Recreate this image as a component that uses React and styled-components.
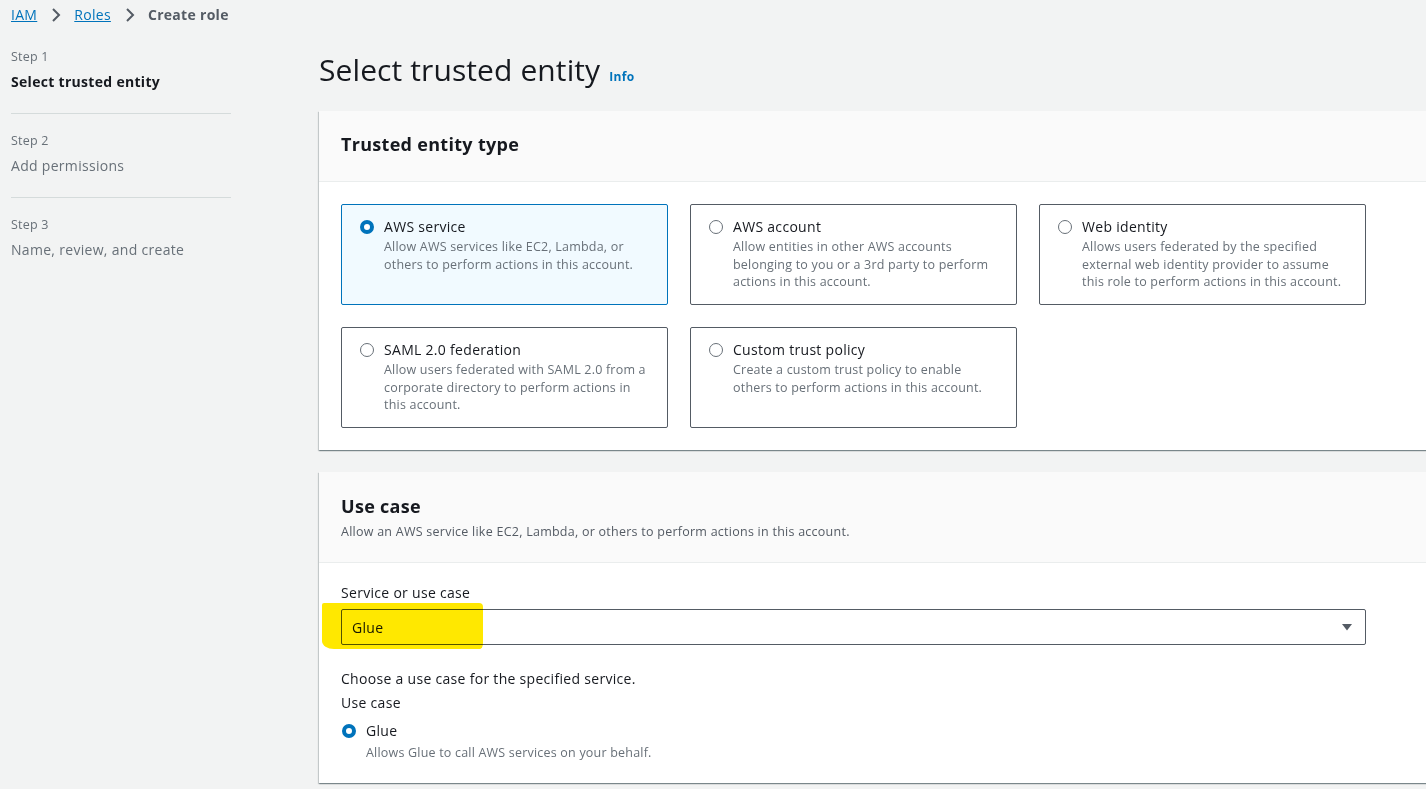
import React from 'react';
import styled, { createGlobalStyle, css } from 'styled-components';

const colors = {
  page: '#f2f3f3',
  text: '#16191f',
  muted: '#545b64',
  soft: '#687078',
  link: '#0073bb',
  tileBorder: '#545b64',
  divider: '#eaeded',
};

const GlobalStyle = createGlobalStyle`
  html, body {
    margin: 0;
    padding: 0;
    background: ${colors.page};
    overflow: hidden;
  }
  body {
    font-family: "Open Sans", "Liberation Sans", Arial, sans-serif;
    color: ${colors.text};
    letter-spacing: 0.3px;
    -webkit-font-smoothing: antialiased;
  }
  * { box-sizing: border-box; }
`;

const Page = styled.div`
  width: 1426px;
  height: 789px;
  overflow: hidden;
  padding: 5px 0 0 11px;
`;

// Breadcrumbs
const Crumbs = styled.nav`
  display: flex;
  align-items: center;
  height: 20px;
  font-size: 14px;
  line-height: 20px;
`;

const CrumbLink = styled.a`
  color: ${colors.link};
  text-decoration: underline;
`;

const CrumbCurrent = styled.span`
  color: ${colors.muted};
  font-weight: 700;
`;

const Chevron = styled.span`
  display: inline-flex;
  margin: 0 11px 0 12px;
  color: ${colors.muted};
`;

const Layout = styled.div`
  display: flex;
  align-items: flex-start;
`;

// Wizard side navigation
const Steps = styled.ol`
  list-style: none;
  margin: 24px 0 0;
  padding: 0;
  width: 220px;
  flex-shrink: 0;
`;

const Step = styled.li`
  padding: ${p => (p.first ? '0 0 21px' : '19px 0 21px')};
  border-bottom: ${p => (p.last ? 'none' : '1px solid #d5dbdb')};
`;

const StepNum = styled.div`
  font-size: 12.5px;
  line-height: 16px;
  letter-spacing: 0.2px;
  color: ${colors.soft};
`;

const StepTitle = styled.div`
  margin-top: 7px;
  font-size: 14px;
  line-height: 20px;
  color: ${p => (p.active ? colors.text : colors.soft)};
  font-weight: ${p => (p.active ? 700 : 400)};
`;

const Main = styled.main`
  margin-left: 88px;
  width: 1130px;
  flex-shrink: 0;
`;

const TitleRow = styled.div`
  display: flex;
  align-items: baseline;
  margin-top: 25px;
  height: 40px;
`;

const Title = styled.h1`
  margin: 0;
  font-size: 30px;
  line-height: 40px;
  font-weight: 400;
  letter-spacing: 0.1px;
  color: ${colors.text};
`;

const InfoLink = styled.a`
  margin-left: 9px;
  font-size: 12px;
  font-weight: 700;
  color: ${colors.link};
`;

const Panel = styled.section`
  background: #fff;
  margin-top: ${p => p.gap || '21px'};
  box-shadow: 0 1px 1px 0 rgba(0, 28, 36, 0.3), 1px 1px 1px 0 rgba(0, 28, 36, 0.15),
    -1px 1px 1px 0 rgba(0, 28, 36, 0.15);
`;

const PanelHeader = styled.header`
  background: #fafafa;
  border-bottom: 1px solid ${colors.divider};
  padding: ${p => p.pad || '21px 22px 25px'};
`;

const PanelTitle = styled.h2`
  margin: 0;
  font-size: 18px;
  line-height: 24px;
  font-weight: 700;
  color: ${colors.text};
`;

const PanelSub = styled.p`
  margin: 6px 0 0;
  font-size: 12.5px;
  line-height: 16px;
  letter-spacing: 0.25px;
  color: ${colors.muted};
`;

const PanelBody = styled.div`
  padding: ${p => p.pad || '22px 22px 22px'};
  width: 1069px;
`;

const TileGrid = styled.div`
  display: grid;
  grid-template-columns: repeat(3, 327px);
  column-gap: 22px;
  row-gap: 22px;
`;

const Tile = styled.label`
  display: flex;
  align-items: flex-start;
  height: 101px;
  padding: 12px 18px 0 18px;
  border: 1px solid ${colors.tileBorder};
  border-radius: 2px;
  background: #fff;
  ${p =>
    p.selected &&
    css`
      border-color: ${colors.link};
      background: #f1faff;
    `}
`;

const Radio = styled.span`
  width: 14px;
  height: 14px;
  margin-top: 3px;
  border-radius: 50%;
  flex-shrink: 0;
  border: 1px solid #687078;
  background: #fff;
  ${p =>
    p.checked &&
    css`
      border: 4px solid ${colors.link};
    `}
`;

const TileText = styled.div`
  margin-left: 10px;
`;

const OptionLabel = styled.div`
  font-size: 14px;
  line-height: 20px;
  color: ${colors.text};
`;

const OptionDesc = styled.div`
  margin-top: ${p => p.gap || '1px'};
  font-size: 12.5px;
  line-height: 17.5px;
  letter-spacing: 0.2px;
  color: ${colors.soft};
`;

const FieldLabel = styled.div`
  font-size: 14px;
  line-height: 20px;
  color: ${colors.text};
  margin-top: ${p => p.gap || '0'};
`;

const SelectWrap = styled.div`
  position: relative;
  margin-top: 6px;
`;

const Select = styled.div`
  display: flex;
  align-items: center;
  justify-content: space-between;
  width: 1025px;
  height: 36px;
  padding: 0 12px 0 10px;
  border: 1px solid ${colors.tileBorder};
  border-radius: 2px;
  font-size: 14px;
  color: ${colors.text};
`;

// hand-drawn yellow marker over the select value
const Highlight = styled.span`
  position: absolute;
  left: -19px;
  top: -6px;
  width: 161px;
  height: 46px;
  background: #ffe800;
  border-radius: 2px 4px 3px 12px / 2px 4px 6px 8px;
  mix-blend-mode: multiply;
  pointer-events: none;
`;

const RadioRow = styled.div`
  display: flex;
  align-items: flex-start;
  margin-top: 8px;
  margin-left: 1px;
`;

const Caret = () => (
  <svg width="12" height="12" viewBox="0 0 12 12">
    <path d="M1 3h10L6 9.5z" fill="#545b64" />
  </svg>
);

const ChevronIcon = () => (
  <svg width="14" height="16" viewBox="0 0 14 16" fill="none">
    <path d="M4 2l6 6-6 6" stroke="currentColor" strokeWidth="2" />
  </svg>
);

const tiles = [
  {
    label: 'AWS service',
    desc: ['Allow AWS services like EC2, Lambda, or', 'others to perform actions in this account.'],
    selected: true,
  },
  {
    label: 'AWS account',
    desc: ['Allow entities in other AWS accounts', 'belonging to you or a 3rd party to perform', 'actions in this account.'],
  },
  {
    label: 'Web identity',
    desc: ['Allows users federated by the specified', 'external web identity provider to assume', 'this role to perform actions in this account.'],
  },
  {
    label: 'SAML 2.0 federation',
    desc: ['Allow users federated with SAML 2.0 from a', 'corporate directory to perform actions in', 'this account.'],
  },
  {
    label: 'Custom trust policy',
    desc: ['Create a custom trust policy to enable', 'others to perform actions in this account.'],
  },
];

const steps = [
  { num: 'Step 1', title: 'Select trusted entity', active: true },
  { num: 'Step 2', title: 'Add permissions' },
  { num: 'Step 3', title: 'Name, review, and create' },
];

export default function App() {
  return (
    <>
      <GlobalStyle />
      <Page>
        <Crumbs>
          <CrumbLink>IAM</CrumbLink>
          <Chevron><ChevronIcon /></Chevron>
          <CrumbLink>Roles</CrumbLink>
          <Chevron><ChevronIcon /></Chevron>
          <CrumbCurrent>Create role</CrumbCurrent>
        </Crumbs>
        <Layout>
          <Steps>
            {steps.map((s, i) => (
              <Step key={s.num} first={i === 0} last={i === steps.length - 1}>
                <StepNum>{s.num}</StepNum>
                <StepTitle active={s.active}>{s.title}</StepTitle>
              </Step>
            ))}
          </Steps>
          <Main>
            <TitleRow>
              <Title>Select trusted entity</Title>
              <InfoLink>Info</InfoLink>
            </TitleRow>

            <Panel>
              <PanelHeader>
                <PanelTitle>Trusted entity type</PanelTitle>
              </PanelHeader>
              <PanelBody>
                <TileGrid>
                  {tiles.map(t => (
                    <Tile key={t.label} selected={t.selected}>
                      <Radio checked={t.selected} />
                      <TileText>
                        <OptionLabel>{t.label}</OptionLabel>
                        <OptionDesc>
                          {t.desc.map(line => (
                            <div key={line}>{line}</div>
                          ))}
                        </OptionDesc>
                      </TileText>
                    </Tile>
                  ))}
                </TileGrid>
              </PanelBody>
            </Panel>

            <Panel gap="22px">
              <PanelHeader pad="22px 22px 22px">
                <PanelTitle>Use case</PanelTitle>
                <PanelSub>Allow an AWS service like EC2, Lambda, or others to perform actions in this account.</PanelSub>
              </PanelHeader>
              <PanelBody pad="20px 22px 21px">
                <FieldLabel>Service or use case</FieldLabel>
                <SelectWrap>
                  <Select>
                    <span>Glue</span>
                    <Caret />
                  </Select>
                  <Highlight />
                </SelectWrap>
                <FieldLabel gap="24px">Choose a use case for the specified service.</FieldLabel>
                <FieldLabel gap="4px">Use case</FieldLabel>
                <RadioRow>
                  <Radio checked />
                  <TileText>
                    <OptionLabel>Glue</OptionLabel>
                    <OptionDesc gap="3px">Allows Glue to call AWS services on your behalf.</OptionDesc>
                  </TileText>
                </RadioRow>
              </PanelBody>
            </Panel>
          </Main>
        </Layout>
      </Page>
    </>
  );
}
